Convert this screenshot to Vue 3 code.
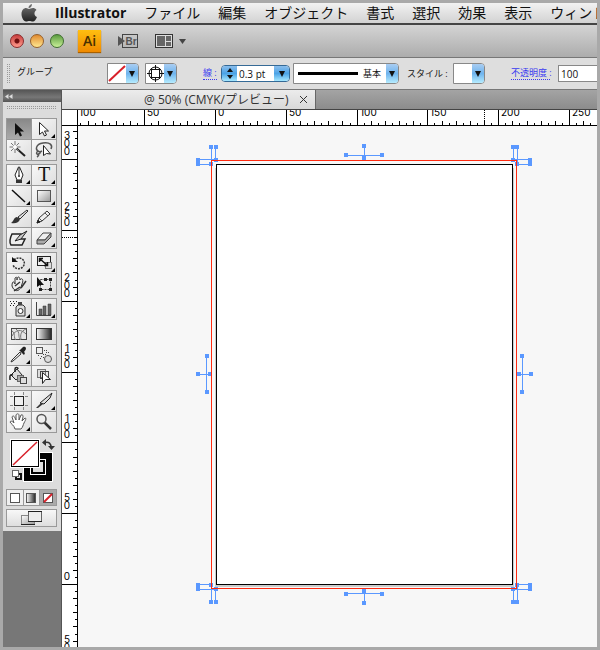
<script setup>
import { ref } from 'vue'

const menus = ['ファイル', '編集', 'オブジェクト', '書式', '選択', '効果', '表示', 'ウィンドウ']
const zoomTab = '@ 50% (CMYK/プレビュー)'
const strokeWidth = ref('0.3 pt')
const opacity = ref('100')

const groups = [
  [
    { name: '選択', on: true, art: '<path d="M8 4v12l3-2.500 2 4 2-1-2-4h4z" fill="#111"/>' },
    { name: 'ダイレクト選択', more: true, art: '<path d="M7.500 3.500v12l3-2.500 2 4 2-1-2-4h4z" fill="#fff" stroke="#222"/>' },
    { name: '自動選択', art: '<path d="M9 8l9 8" stroke="#222" stroke-width="2"/><path d="M8 1v12M2.500 7h11M4 3l8 8M12 3l-8 8" stroke="#777"/><circle cx="8" cy="7" r="2" fill="#fff"/>' },
    { name: 'なげなわ', art: '<path d="M8 12C2 10 4 4 11 3s10 2 8 6M8 12c-3-2-4 1-3 2s4-1 3-2l2-1M7 13c0 2 0 3-2 4" fill="none" stroke="#555" stroke-width="1.500"/><path d="M11.500 5.500v10l3-2 4 .5z" fill="#fff" stroke="#222"/>' },
  ],
  [
    { name: 'ペン', more: true, art: '<path d="M11.500 2L8 10l2 5h4l2-5-3.500-8z" fill="#fff" stroke="#222"/><path d="M12 3v7" stroke="#222"/><circle cx="12" cy="11" r="1" fill="#222"/><path d="M9 15h6v3H9z" fill="#333"/>' },
    { name: '文字', more: true, art: '<text x="12" y="16" text-anchor="middle" font-family="Liberation Serif, serif" font-size="20" fill="#111">T</text>' },
    { name: '直線', more: true, art: '<path d="M5 4l13 12" stroke="#111" stroke-width="1.500"/>' },
    { name: '長方形', more: true, art: '<rect x="5.500" y="4.500" width="13" height="11" fill="url(#soft)" stroke="#555"/>' },
    { name: 'ブラシ', art: '<path d="M20 3l-9 7 2 2 8-8z" fill="#ddd" stroke="#333"/><path d="M10 10c-3 0-3 4-6 6 4 1 8 0 9-4z" fill="#333"/>' },
    { name: '鉛筆', more: true, art: '<path d="M5 16l2-5 8-7 3 3-8 7z" fill="#eee" stroke="#333"/><path d="M5 16l1-3 2 2z" fill="#222" stroke="#222"/><path d="M7 11l3 3M13 6l3 3" stroke="#555"/>' },
    { name: '塗りブラシ', art: '<path d="M5 6h9v5h4l-3 6H4c-2-3-1-7 1-11z" fill="#eee" stroke="#222" stroke-width="1.500"/><path d="M20 3l-7 4-5 6 6-2z" fill="#ccc" stroke="#222"/>' },
    { name: '消しゴム', more: true, art: '<path d="M5 12l6-7h8l-6 7z" fill="#eee" stroke="#444"/><path d="M5 12v4h7l7-7V5l-6 7z" fill="#aaa" stroke="#444"/>' },
  ],
  [
    { name: '回転', more: true, art: '<path d="M7 7C12 2 19 7 17 12s-9 5-11 0" fill="none" stroke="#333" stroke-width="1.500" stroke-dasharray="2 1"/><path d="M5 4v5h6z" fill="#111"/>' },
    { name: '拡大・縮小', more: true, art: '<rect x="5.500" y="3.500" width="13" height="9" fill="#eee" stroke="#222"/><rect x="13.500" y="9.500" width="6" height="6" fill="#ddd" stroke="#777"/><path d="M8 6l7 6M7.500 9V5.500H11M15.500 9v3.500H12" fill="none" stroke="#111" stroke-width="1.500"/>' },
    { name: 'ワープ', more: true, art: '<path d="M5 12c0-5 2-5 3-2V4c2-2 2 0 2 2 0-4 3-4 3 0 2-3 4 0 2 4l-1 3c-2 5-7 5-9-1z" fill="#eee" stroke="#333"/><path d="M14 14l5-7M7 17l6-4M8 12l5-4" stroke="#333" stroke-width="1.500"/>' },
    { name: '自由変形', art: '<rect x="8.500" y="5.500" width="10" height="10" fill="none" stroke="#444" stroke-dasharray="2 1"/><path d="M5 3v10l3-2h4z" fill="#111"/><path d="M17 4h3v3h-3zM7 14h3v3H7zM17 14h3v3h-3zM12 4h3v3h-3z" fill="#222"/>' },
  ],
  [
    { name: 'シンボルスプレー', more: true, art: '<path d="M9 8l2-2h5l2 2v9H9z" fill="#ddd" stroke="#333"/><path d="M11 3h4v3h-4z" fill="#444"/><circle cx="13.500" cy="12" r="2.500" fill="#fff" stroke="#333"/><path d="M3 2.500h1M6 2.500h1M9 2.500h1M4 4.500h1M7 4.500h1M3 6.500h1M6 6.500h1" stroke="#222"/>' },
    { name: '棒グラフ', more: true, art: '<path d="M4.500 3v13.500H19" fill="none" stroke="#444"/><path d="M7 10h3v6H7zM11 7h3v9h-3zM16 5h3v11h-3z" fill="#666" stroke="#333" stroke-width=".5"/>' },
  ],
  [
    { name: 'メッシュ', art: '<rect x="4.500" y="4.500" width="15" height="11" fill="#e5e5e5" stroke="#444"/><path d="M5 12c4-7 9-7 14-2M9 5c5 4 1 8 5 11M5 7c4 2 1 7 4 9M19 5c-5 2-6 6-5 10" fill="none" stroke="#777"/>' },
    { name: 'グラデーション', art: '<rect x="4.500" y="4.500" width="15" height="11" fill="url(#ramp)" stroke="#333"/>' },
    { name: 'スポイト', more: true, art: '<path d="M13 7L5 15l-1 2 2-1 8-7z" fill="#eee" stroke="#333"/><path d="M12 5l5 5 1-2-1-1c4-4 1-6-1-5l-3 3z" fill="#222"/>' },
    { name: 'ブレンド', art: '<rect x="4.500" y="2.500" width="6" height="6" fill="#eee" stroke="#555"/><circle cx="16" cy="14" r="3.500" fill="#ddd" stroke="#555"/><path d="M12 5.500h1M14 7.500h1M11 9.500h1M13 9.500h1M16 7.500h1M9 11.500h1M11 12.500h1M6 10.500h1M8 13.500h1M14 5.500h1" stroke="#444"/>' },
    { name: 'ライブペイント', art: '<path d="M4 9l6-6 5 6-6 5z" fill="#ddd" stroke="#222"/><path d="M6 9C2 8 3 11 3 14M8 6V3c0-2 3-2 3 0" fill="none" stroke="#222" stroke-width="1.500"/><rect x="10.500" y="9.500" width="6" height="6" fill="#aaa" stroke="#666"/><rect x="13.500" y="11.500" width="6" height="6" fill="#ddd" stroke="#444"/>' },
    { name: 'ライブペイント選択', art: '<rect x="5.500" y="3.500" width="8" height="8" fill="#ddd" stroke="#777"/><rect x="8.500" y="5.500" width="8" height="7" fill="none" stroke="#444"/><path d="M10.500 6.500v11l3-4h5z" fill="#fff" stroke="#222"/>' },
  ],
  [
    { name: 'アートボード', art: '<rect x="7.500" y="5.500" width="9" height="9" fill="#eee" stroke="#222"/><path d="M7.500 1v3M16.500 1v3M7.500 16v3M16.500 16v3M3 5.500h3M3 14.500h3M18 5.500h3M18 14.500h3" stroke="#888"/>' },
    { name: 'スライス', more: true, art: '<path d="M20 2L8 12l4 1 6-6z" fill="#ddd" stroke="#222"/><path d="M4 17l5-5 2 1-5 4z" fill="#333"/>' },
    { name: '手のひら', more: true, art: '<path d="M8 17c-1-4-4-5-5-7 1-2 3 0 4 1L5 5c1-2 2-1 3 1l1 2V3c1-2 3-1 3 0v5l2-5c2-1 2 1 2 2l-1 4 3-3c2 0 0 3-1 5s-1 4-3 6z" fill="#fff" stroke="#555"/>' },
    { name: 'ズーム', art: '<path d="M12 10l7 7" stroke="#333" stroke-width="2.500"/><circle cx="9.500" cy="7" r="4.500" fill="#eee" stroke="#555" stroke-width="1.500"/>' },
  ],
]

// Ruler geometry: one labelled division every 50 mm, ten ticks in each.
const STEP = 70.8
function ticks(origin, from, to) {
  const out = []
  for (let k = -90; k <= 90; k++) {
    const pos = Math.round(origin + (k * STEP) / 10)
    if (pos < from || pos > to) continue
    out.push({ pos: pos + 0.5, size: k % 10 === 0 ? 16 : k % 2 === 0 ? 5 : 3 })
  }
  return out
}
const across = ticks(137, 2, 900)
const acrossLabels = [-100, -50, 0, 50, 100, 150, 200, 250].map((v) => ({
  x: v === -100 ? 1 : Math.round(140 + (v / 50) * STEP),
  text: String(Math.abs(v)),
}))
const down = ticks(458, 2, 900)
const downLabels = [300, 250, 200, 150, 100, 50, 0, -50].flatMap((v) => {
  const digits = String(Math.abs(v)).split('')
  const tick = Math.round(458 - (v / 50) * STEP)
  const start = v < 0 ? 517 : tick - 4 - (digits.length - 1) * 8
  return digits.map((text, i) => ({ text, y: start + i * 8 }))
})

// Trim marks: anchor points and the paths that join them, in window units.
const anchors = [
  [211, 147], [216, 147], [198, 160], [216, 160], [198, 164], [211, 164],
  [513, 147], [517, 147], [513, 160], [530, 160], [530, 164], [517, 164],
  [364, 146], [346, 155], [382, 155], [364, 158],
  [198, 585], [211, 585], [198, 589], [216, 589], [211, 602], [216, 602],
  [364, 591], [346, 594], [382, 594], [364, 603],
  [517, 585], [530, 585], [530, 589], [513, 589], [513, 602], [517, 602],
  [522, 356], [519, 374], [531, 374], [522, 392],
  [207, 356], [198, 374], [210, 374], [207, 392],
]
const marks =
  'M211.500 147V164M198.500 160V164.500H211M215.500 147V159.500H198' +
  'M513.500 147V159.500H530M517.500 147V164.500H530' +
  'M364.500 146V158M346 155.500H382' +
  'M198 584.500H211.500V602M198 589.500H215.500V602' +
  'M364.500 591V603M346 593.500H382' +
  'M530 584.500H517.500V602M530 589.500H513.500V602' +
  'M522.500 356V392M519 374.500H531' +
  'M206.500 356V392M198 374.500H210'
</script>

<template>
  <div class="window">
    <svg class="defs" aria-hidden="true">
      <linearGradient id="soft" x2="1" y2="1"><stop stop-color="#fff" /><stop offset="1" stop-color="#999" /></linearGradient>
      <linearGradient id="ramp"><stop stop-color="#fff" /><stop offset="1" stop-color="#222" /></linearGradient>
      <linearGradient id="metal" y2="1" x2="0"><stop stop-color="#777" /><stop offset="1" stop-color="#222" /></linearGradient>
    </svg>

    <nav class="menubar">
      <svg class="apple" width="16" height="18" viewBox="0 0 16 18">
        <path d="M11 0c0 2-1 4-3.500 4C7.500 2 9 .5 11 0zM8 5c1 0 2-1 4-1 1 0 2.500.5 3.500 2-3 2-2.500 6 .5 7-1 2.500-2.500 4.500-4 4.500S9.500 17 8.300 17s-2 .5-3.300.5C2.500 17.500.500 13 .500 10c0-4 2.500-6 4.500-6 1.300 0 2 1 3 1z" fill="url(#metal)" />
      </svg>
      <a href="#" class="app-name">Illustrator</a>
      <a v-for="m in menus" :key="m" href="#">{{ m }}</a>
    </nav>

    <header class="appbar">
      <div class="lights">
        <button class="light red" aria-label="閉じる"></button>
        <button class="light amber" aria-label="しまう"></button>
        <button class="light green" aria-label="拡大"></button>
      </div>
      <span class="ai">Ai</span>
      <button class="bridge" aria-label="Bridge">
        <svg width="21" height="16" viewBox="0 0 21 16">
          <rect x="4.500" y="1.500" width="15" height="13" fill="none" stroke="#444" />
          <path d="M0 3v10l7-5z" fill="#555" />
          <text x="13" y="12" text-anchor="middle" font-family="Liberation Sans, sans-serif" font-size="10" font-weight="bold" fill="#555">Br</text>
        </svg>
      </button>
      <button class="arrange" aria-label="ドキュメントレイアウト">
        <svg width="32" height="16" viewBox="0 0 32 16">
          <rect x=".5" y="1.500" width="17" height="13" fill="#ddd" stroke="#333" />
          <path d="M2 3h8v10H2zM11 3h5v5h-5zM11 9h5v4h-5z" fill="#666" />
          <path d="M24 6h7l-3.500 5z" fill="#444" />
        </svg>
      </button>
    </header>

    <section class="options">
      <i class="grip"></i>
      <span class="kind">グループ</span>
      <button class="combo fill" aria-label="塗り">
        <svg width="18" height="19" viewBox="0 0 18 19"><path d="M1 17L17 2" stroke="#d8202a" stroke-width="2" /></svg>
        <b class="arrow"></b>
      </button>
      <button class="combo target" aria-label="線の色">
        <svg width="18" height="19" viewBox="0 0 18 19" fill="none" stroke="#111">
          <circle cx="9.500" cy="9.500" r="6.500" /><rect x="5.500" y="5.500" width="8" height="8" fill="#fff" />
          <path d="M9.500 1v4M9.500 14v4M1 9.500h4M14 9.500h4" />
        </svg>
        <b class="arrow"></b>
      </button>
      <label class="link stroke-label" for="stroke">線 :</label>
      <div class="stepper">
        <button class="spin" aria-label="増減">
          <svg width="16" height="15" viewBox="0 0 16 15"><path d="M5 6l3-4 3 4zM5 9h6l-3 4z" fill="#111" /></svg>
        </button>
        <input id="stroke" v-model="strokeWidth" />
        <button class="arrow wide" aria-label="線幅の一覧"></button>
      </div>
      <button class="combo brush" aria-label="ブラシ定義"><i class="line"></i><span>基本</span><b class="arrow"></b></button>
      <label class="style-label" for="gstyle">スタイル :</label>
      <button id="gstyle" class="combo gstyle"><b class="arrow"></b></button>
      <label class="link opacity-label" for="opacity">不透明度 :</label>
      <input id="opacity" v-model="opacity" class="opacity" />
    </section>

    <main class="work">
      <aside class="tools">
        <button class="collapse" aria-label="パネルを折りたたむ">
          <svg width="8" height="5" viewBox="0 0 8 5"><path d="M3.500 0v5L0 2.500zM7.500 0v5L4 2.500z" fill="#ddd" /></svg>
        </button>
        <div class="palette">
          <i class="handle"></i>
          <div v-for="(g, i) in groups" :key="i" class="group">
            <button v-for="t in g" :key="t.name" class="tool" :class="{ on: t.on, more: t.more }" :aria-label="t.name">
              <svg width="24" height="20" viewBox="0 0 24 20" fill="none" v-html="t.art"></svg>
            </button>
          </div>
          <svg class="paint" width="51" height="48" viewBox="0 0 51 48">
            <rect x="17" y="16" width="30" height="30" fill="#fff" />
            <rect x="18" y="17" width="28" height="28" fill="#000" />
            <rect x="24.500" y="23.500" width="15" height="15" fill="#000" stroke="#fff" />
            <rect x="27" y="26" width="10" height="10" fill="#ddd" />
            <rect x="4" y="3" width="30" height="29" fill="#fff" />
            <rect x="5.500" y="4.500" width="27" height="26" fill="#fff" stroke="#000" />
            <path d="M7 29L31 6" stroke="#d8202a" stroke-width="1.500" />
            <path d="M39 6.500c4-1 6 1 6 5" fill="none" stroke="#333" stroke-width="1.500" />
            <path d="M40 3v7l-4-3.500zM42 10h7l-3.500 4z" fill="#333" />
            <rect x="10" y="38" width="5" height="5" fill="#ddd" stroke="#111" stroke-width="2" />
            <rect x="6.500" y="34.500" width="6" height="6" fill="#fff" stroke="#666" />
          </svg>
          <div class="modes">
            <button aria-label="カラー"><svg width="10" height="10"><rect x=".5" y=".5" width="9" height="9" fill="#fff" stroke="#555" /></svg></button>
            <button aria-label="グラデーション"><svg width="10" height="10"><rect x=".5" y=".5" width="9" height="9" fill="url(#ramp)" stroke="#555" /></svg></button>
            <button class="on" aria-label="なし"><svg width="10" height="10"><rect x=".5" y=".5" width="9" height="9" fill="#fff" stroke="#555" /><path d="M1 9L9 1" stroke="#d8202a" stroke-width="2" /></svg></button>
          </div>
          <button class="screen" aria-label="スクリーンモード">
            <svg width="22" height="16" viewBox="0 0 22 16">
              <rect x=".5" y="5.500" width="13" height="9" fill="url(#soft)" stroke="#888" /><path d="M0 14.500h14" stroke="#222" />
              <rect x="7.500" y="1.500" width="13" height="10" fill="#eee" stroke="#666" /><path d="M7 1.500h14M7 11.500h14" stroke="#222" />
            </svg>
          </button>
        </div>
      </aside>

      <section class="document">
        <div class="tabs">
          <div class="tab">
            <span>{{ zoomTab }}</span>
            <button class="close" aria-label="タブを閉じる">
              <svg width="7" height="7" viewBox="0 0 7 7"><path d="M0 0l7 7M7 0L0 7" stroke="#333" /></svg>
            </button>
          </div>
        </div>
        <div class="sheet">
          <i class="corner"></i>
          <svg class="ruler-x">
            <path v-for="t in across" :key="t.pos" :d="`M${t.pos} 16V${16 - t.size}`" stroke="#000" />
            <path d="M406.500 0V16" stroke="#000" stroke-dasharray="1 1" />
            <text v-for="l in acrossLabels" :key="l.x" :x="l.x" y="6">{{ l.text }}</text>
          </svg>
          <svg class="ruler-y">
            <path v-for="t in down" :key="t.pos" :d="`M16 ${t.pos}H${16 - t.size}`" stroke="#000" />
            <path d="M0 111.500H16" stroke="#000" stroke-dasharray="1 1" />
            <text v-for="l in downLabels" :key="l.y" x="5" text-anchor="middle" :y="l.y">{{ l.text }}</text>
          </svg>
          <svg class="canvas">
            <g transform="translate(-78 -126)" fill="none">
              <path d="M215 168H514V587H215z" fill="#ccc" />
              <rect x="216.500" y="164.500" width="296" height="420" fill="#fff" stroke="#000" />
              <path :d="marks" stroke="#5a98ff" />
              <rect v-for="(a, i) in anchors" :key="i" :x="a[0] - 2" :y="a[1] - 2" width="4" height="4" fill="#5a98ff" />
              <rect x="211.500" y="160.500" width="305" height="428" stroke="#ff2a10" />
            </g>
          </svg>
        </div>
      </section>
    </main>
  </div>
</template>

<style>
body { margin: 0; }
</style>

<style scoped>
* { box-sizing: border-box; }
button, input { margin: 0; padding: 0; border: 0; border-radius: 0; background: none; font: inherit; color: inherit; }
button { display: flex; align-items: center; justify-content: center; }
a { color: inherit; text-decoration: none; }
svg { display: block; flex: none; }
.defs { position: absolute; width: 0; height: 0; }

.window {
  display: flex; flex-direction: column; height: 100vh; overflow: hidden;
  border: 3px solid #a9a9a9; background: #f7f7f7;
  font-family: "Open Sans", "Noto Sans CJK JP", sans-serif; color: #111;
}
.menubar {
  display: flex; flex: none; align-items: center; gap: 18px; height: 22px; padding-left: 18px;
  border-bottom: 2px solid #444; background: linear-gradient(#f2f2f2, #d2d2d2);
  font-size: 14px; line-height: 20px; white-space: nowrap; overflow: hidden;
}
.app-name { font-weight: 700; }

.appbar {
  display: flex; flex: none; align-items: center; height: 33px; padding-left: 7px;
  border-bottom: 1px solid #777; background: linear-gradient(#d4d4d4, #acacac);
}
.lights { display: flex; gap: 6px; }
.light { width: 14px; height: 14px; border-radius: 50%; border: 1px solid #555; }
.red { background: radial-gradient(circle at 50% 50%, #701010 0 2px, transparent 3px), linear-gradient(#c84040, #ff9a8c); border-color: #8a2a2a; }
.amber { background: linear-gradient(#e08a30, #ffe890); border-color: #96602a; }
.green { background: linear-gradient(#5c9c40, #c8f098); border-color: #3f6d30; }
.ai {
  display: flex; align-items: center; justify-content: center; width: 23px; height: 22px; margin-left: 14px;
  background: linear-gradient(#ffbf10, #f08a00); box-shadow: 0 1px 1px #a86000;
  font-size: 14px; line-height: 20px; font-weight: 600; color: #4a3000;
}
.bridge { margin-left: 17px; }
.arrange { margin-left: 16px; }

.options {
  display: flex; flex: none; align-items: center; height: 32px; padding-left: 3px;
  border-bottom: 1px solid #777; background: #dedede;
  font-size: 9px; line-height: 12px; white-space: nowrap; overflow: hidden;
}
.options > * { flex: none; }
.grip { width: 4px; height: 20px; background: conic-gradient(#999 25%, transparent 0) 0 0 / 2px 2px; }
.kind { width: 97px; padding: 0 0 3px 7px; }
.combo { width: 32px; height: 21px; border: 1px solid #888; background: #fff; border-radius: 0 4px 4px 0; justify-content: space-between; }
.arrow {
  display: flex; align-items: center; justify-content: center; flex: none;
  width: 12px; height: 19px; border-radius: 0 3px 3px 0;
  background: linear-gradient(#a9cdf2, #6fb4ee 50%, #b5ecff);
}
.arrow::after { content: ""; border: 3px solid transparent; border-top: 6px solid #111; border-bottom: 0; }
.target { margin-left: 6px; }
.link { color: #3a3af0; border-bottom: 1px dotted #3a3af0; }
.stroke-label { margin-left: 26px; width: 14px; }
.stepper {
  display: flex; width: 69px; height: 17px; margin-left: 4px; overflow: hidden;
  border: 1px solid #356a96; border-radius: 4px; background: #fff;
}
.stepper input { flex: 1; min-width: 0; padding-left: 2px; font-size: 10px; }
.spin, .wide { width: 15px; height: 15px; background: linear-gradient(#8abdec, #4ba3e6 50%, #a5e8ff); }
.brush { width: 106px; margin-left: 3px; }
.brush .line { width: 60px; height: 3px; margin-left: 4px; background: #000; }
.style-label { margin-left: 8px; width: 46px; }
.gstyle { justify-content: flex-end; }
.opacity-label { margin-left: 26px; width: 39px; }
.opacity { width: 60px; height: 17px; margin-left: 8px; padding-left: 2px; border: 1px solid #888; background: #fff; font-size: 10px; }

.work { display: flex; flex: 1; min-height: 0; }
.tools { flex: none; width: 59px; border-right: 1px solid #555; background: #777; }
.collapse { justify-content: flex-start; width: 100%; height: 12px; padding-left: 2px; background: linear-gradient(#555, #777 60%, #555); }
.palette { display: flex; flex-direction: column; gap: 3px; padding: 4px 0 4px 3px; background: #dcdcdc; }
.handle { height: 4px; width: 51px; margin-bottom: 5px; background: conic-gradient(#999 25%, transparent 0) 0 0 / 2px 2px; }
.group { display: grid; grid-template-columns: 24px 24px; gap: 1px; width: 51px; padding: 1px; background: #999; }
.tool { position: relative; height: 20px; background: linear-gradient(135deg, #f8f8f8, #dedede); }
.tool.on { background: linear-gradient(#888, #aaa); }
.more::after { content: ""; position: absolute; right: 1px; bottom: 1px; border: 2px solid #000; border-top-color: transparent; border-left-color: transparent; }
.paint { margin-bottom: 2px; }
.modes { display: grid; grid-template-columns: repeat(3, 1fr); gap: 1px; width: 51px; height: 17px; padding: 1px; background: #999; }
.modes button { background: #efefef; }
.modes .on { background: #aaa; }
.screen { width: 51px; height: 18px; border: 1px solid #999; background: linear-gradient(#f8f8f8, #dedede); }

.document { display: flex; flex: 1; flex-direction: column; min-width: 0; }
.tabs { display: flex; flex: none; height: 20px; border-bottom: 1px solid #444; background: linear-gradient(#a4a4a4, #8c8c8c); }
.tab {
  display: flex; align-items: center; gap: 11px; padding: 0 8px 0 82px;
  border-right: 1px solid #666; background: linear-gradient(#ececec, #d8d8d8);
  font-size: 12px; line-height: 16px; color: #333; white-space: nowrap;
}
.sheet { display: grid; grid-template: 16px 1fr / 16px 1fr; flex: 1; min-height: 0; }
.corner, .ruler-x, .ruler-y { background: #fff; }
.corner, .ruler-x { border-bottom: 1px solid #000; }
.corner, .ruler-y { border-right: 1px solid #000; }
.ruler-x, .ruler-y, .canvas { width: 100%; height: 100%; min-height: 0; overflow: hidden; }
.ruler-x text, .ruler-y text { font-family: Inter, sans-serif; font-size: 10px; fill: #000; }
.canvas { background: #f7f7f7; }
</style>
